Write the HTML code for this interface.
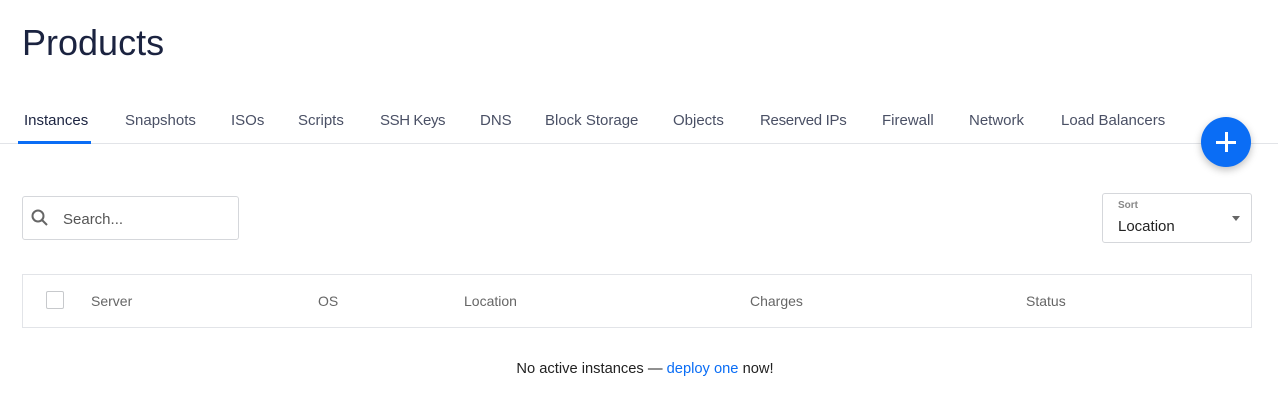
<!DOCTYPE html>
<html><head><style>
body{margin:0;width:1278px;height:402px;background:#fff;font-family:"Liberation Sans",sans-serif;position:relative;overflow:hidden;color:#1f2a3c}
.a{position:absolute;white-space:nowrap}
h1{position:absolute;left:22px;top:22px;margin:0;font-weight:400;font-size:36px;color:#1b2340}
.tab{position:absolute;top:112px;font-size:15px;color:#4a5065}
</style></head><body>
<h1>Products</h1>
<div class="tab" style="left:24px;color:#1b2340">Instances</div>
<div class="tab" style="left:125px">Snapshots</div>
<div class="tab" style="left:231px">ISOs</div>
<div class="tab" style="left:298px">Scripts</div>
<div class="tab" style="left:380px;letter-spacing:-0.4px">SSH Keys</div>
<div class="tab" style="left:480px">DNS</div>
<div class="tab" style="left:545px">Block Storage</div>
<div class="tab" style="left:673px">Objects</div>
<div class="tab" style="left:760px;letter-spacing:-0.3px">Reserved IPs</div>
<div class="tab" style="left:882px">Firewall</div>
<div class="tab" style="left:969px">Network</div>
<div class="tab" style="left:1061px">Load Balancers</div>
<div class="a" style="left:0;top:143px;width:1278px;height:1px;background:#e2e4e8"></div>
<div class="a" style="left:18px;top:141px;width:73px;height:3px;background:#0a6df5"></div>
<div class="a" style="left:1201px;top:117px;width:50px;height:50px;border-radius:50%;background:#0a6df5;box-shadow:0 3px 8px rgba(0,0,0,.25)"></div>
<div class="a" style="left:1216px;top:141px;width:20px;height:3px;background:#fff"></div>
<div class="a" style="left:1224.5px;top:132px;width:3px;height:20px;background:#fff"></div>
<div class="a" style="left:22px;top:196px;width:215px;height:42px;border:1px solid #d5d7db;border-radius:3px"></div>
<svg class="a" style="left:30px;top:208px" width="20" height="20" viewBox="0 0 20 20"><circle cx="8" cy="8" r="5.5" fill="none" stroke="#666" stroke-width="2"/><path d="M12 12l5 5" stroke="#666" stroke-width="2"/></svg>
<div class="a" style="left:63px;top:211px;font-size:15px;color:#555">Search...</div>
<div class="a" style="left:1102px;top:193px;width:148px;height:48px;border:1px solid #d5d7db;border-radius:3px"></div>
<div class="a" style="left:1118px;top:200px;font-size:10px;color:#888;font-weight:bold">Sort</div>
<div class="a" style="left:1118px;top:218px;font-size:15px;color:#222">Location</div>
<div class="a" style="left:1232px;top:216px;width:0;height:0;border-left:4px solid transparent;border-right:4px solid transparent;border-top:5px solid #666"></div>
<div class="a" style="left:22px;top:274px;width:1228px;height:52px;border:1px solid #e2e4e8"></div>
<div class="a" style="left:46px;top:291px;width:16px;height:16px;border:1px solid #c7c9cc;border-radius:2px"></div>
<div class="a" style="left:91px;top:293px;font-size:14px;color:#666">Server</div>
<div class="a" style="left:318px;top:293px;font-size:14px;color:#666">OS</div>
<div class="a" style="left:464px;top:293px;font-size:14px;color:#666">Location</div>
<div class="a" style="left:750px;top:293px;font-size:14px;color:#666">Charges</div>
<div class="a" style="left:1026px;top:293px;font-size:14px;color:#666">Status</div>
<div class="a" style="left:0;width:1290px;text-align:center;top:361px;font-size:14.7px;color:#222">No active instances — <span style="color:#0a6df5">deploy one</span> now!</div>
</body></html>
